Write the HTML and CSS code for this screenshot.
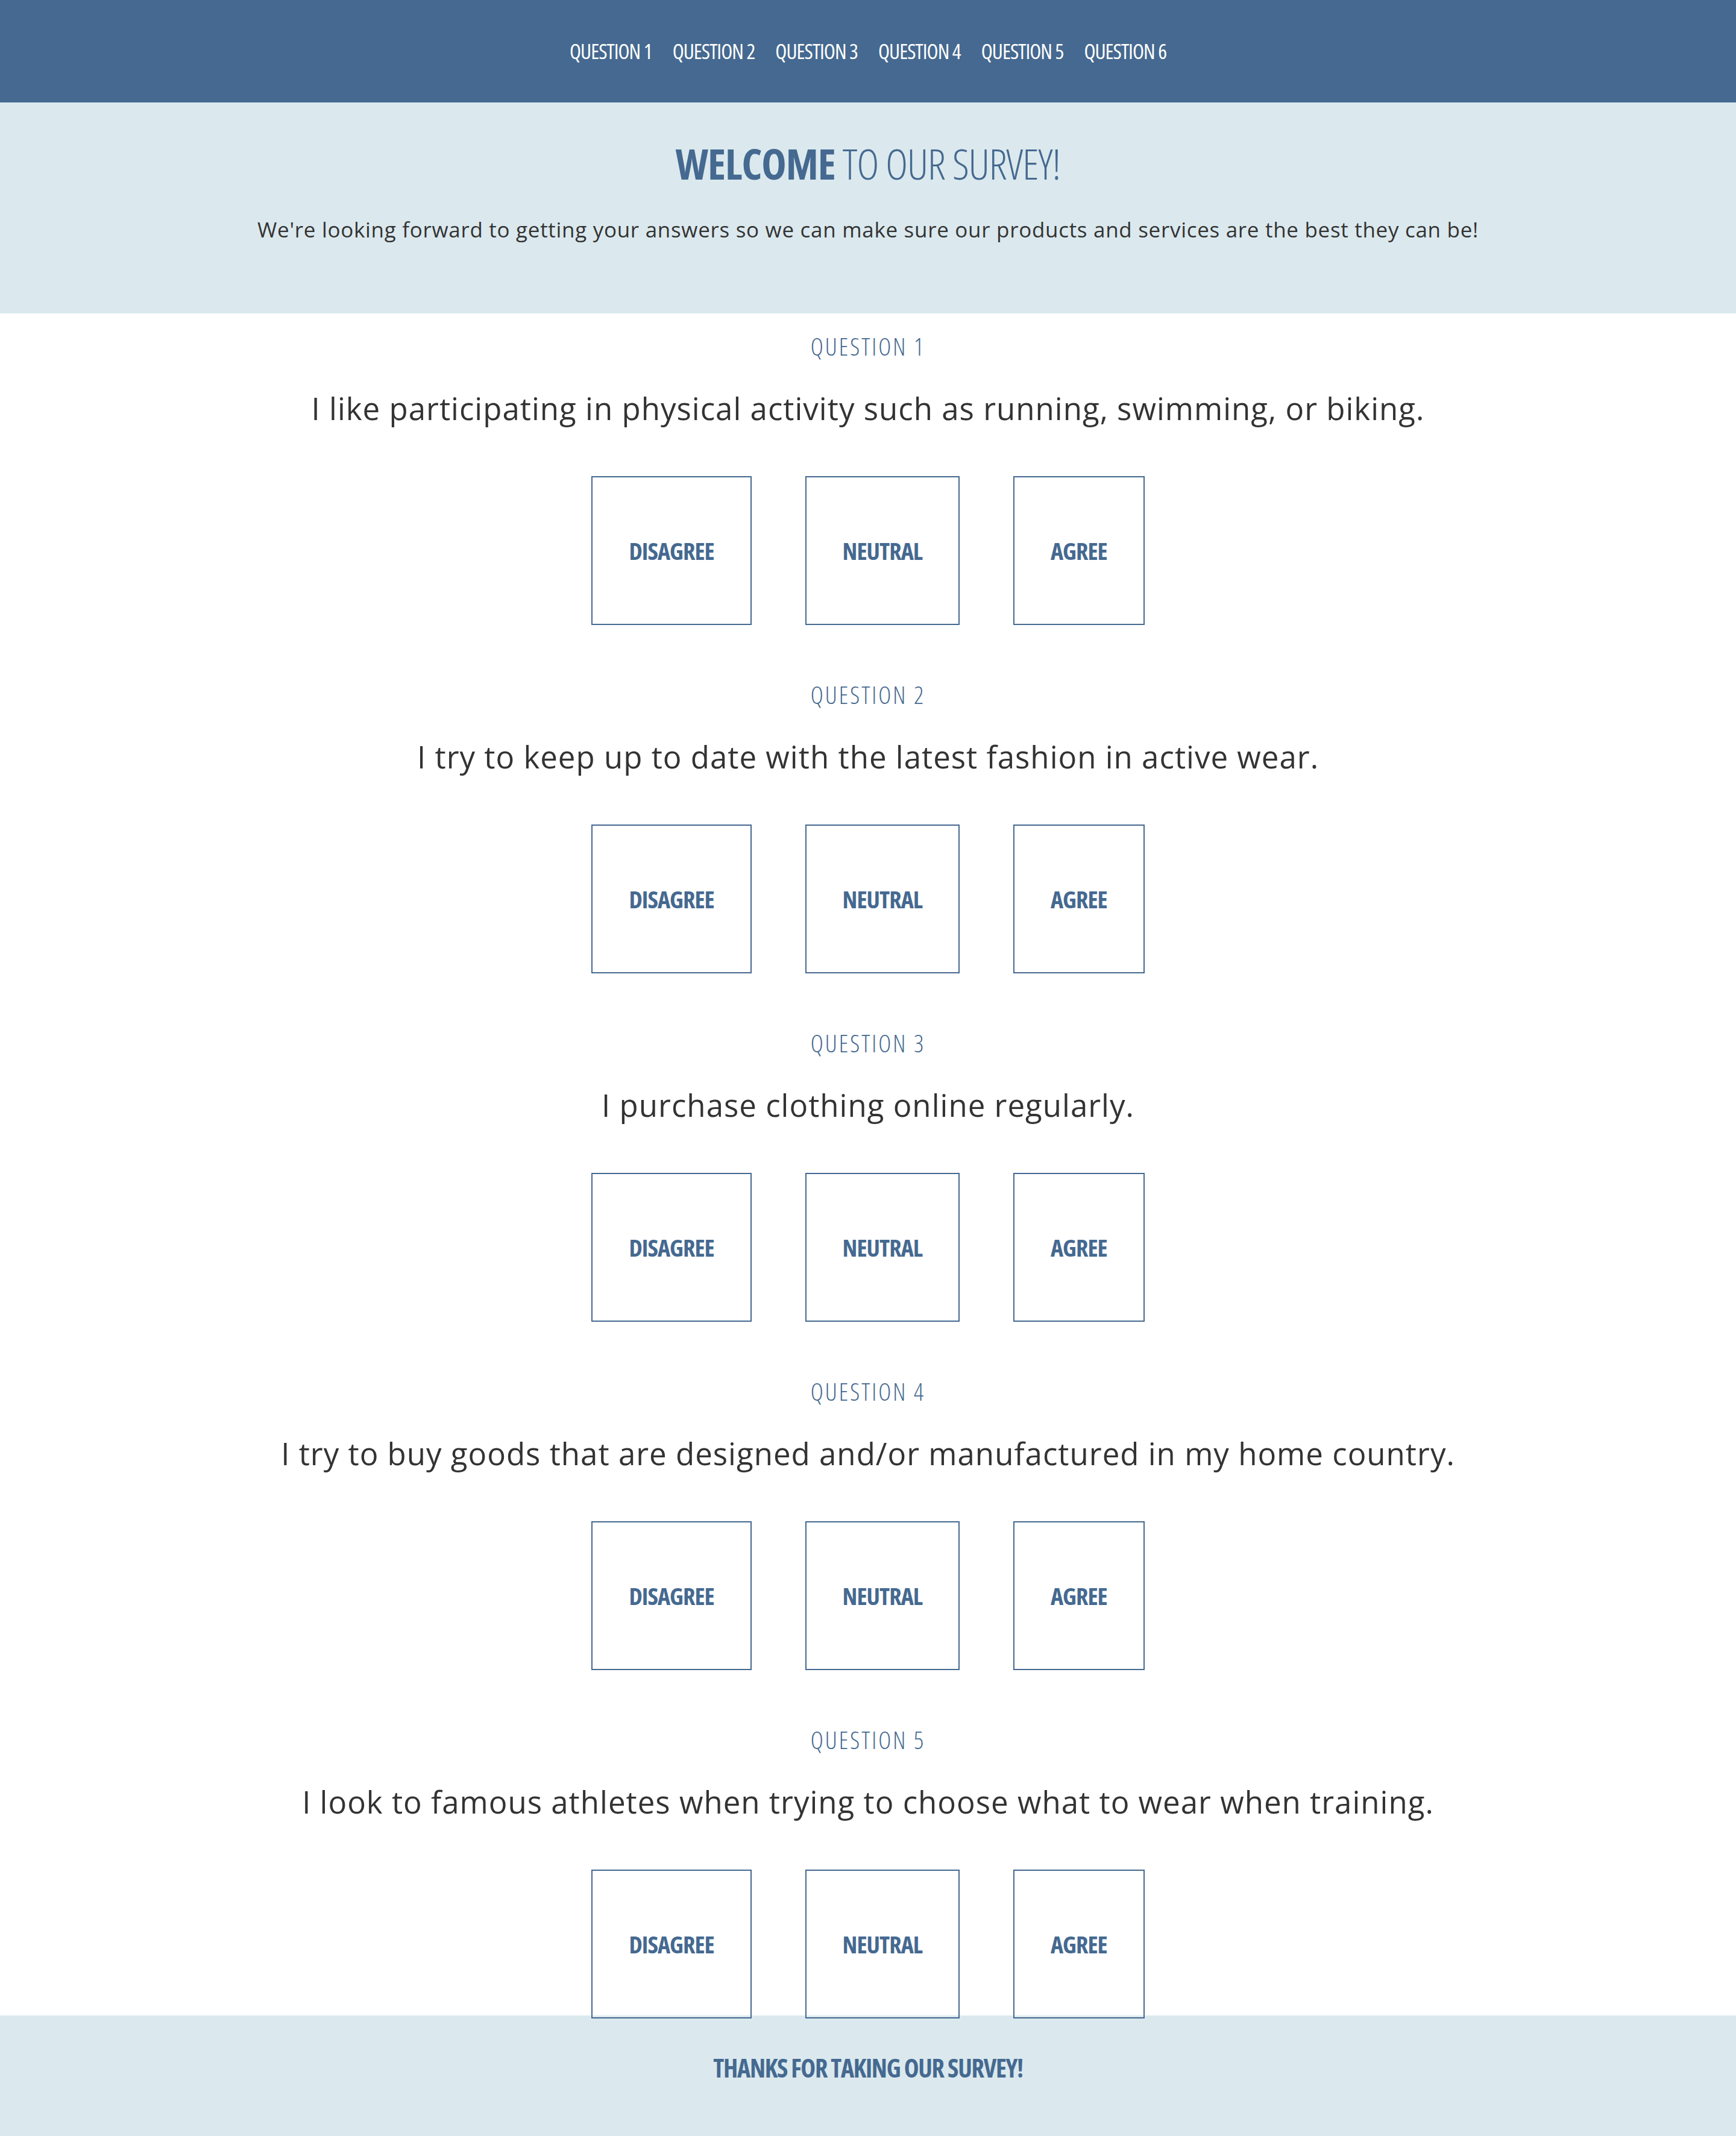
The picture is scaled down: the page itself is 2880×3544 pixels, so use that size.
FILE: index.html
```html
<!DOCTYPE html>
<html lang="en">
<head>
<meta charset="utf-8">
<title>Survey</title>
<link rel="stylesheet" href="styles.css">
</head>
<body>
<nav class="topnav">
  <a class="nav-link" href="#q1">Question 1</a>
  <a class="nav-link" href="#q2">Question 2</a>
  <a class="nav-link" href="#q3">Question 3</a>
  <a class="nav-link" href="#q4">Question 4</a>
  <a class="nav-link" href="#q5">Question 5</a>
  <a class="nav-link" href="#q6">Question 6</a>
</nav>
<header class="hero">
  <h1 class="hero-title"><span class="hero-strong">Welcome</span> to our survey!</h1>
  <p class="hero-sub">We're looking forward to getting your answers so we can make sure our products and services are the best they can be!</p>
</header>
<main class="questions">
  <section class="question" id="q1">
    <h2 class="q-label">Question 1</h2>
    <p class="q-text">I like participating in physical activity such as running, swimming, or biking.</p>
    <div class="choices"><div class="choice">Disagree</div><div class="choice">Neutral</div><div class="choice">Agree</div></div>
  </section>
  <section class="question" id="q2">
    <h2 class="q-label">Question 2</h2>
    <p class="q-text">I try to keep up to date with the latest fashion in active wear.</p>
    <div class="choices"><div class="choice">Disagree</div><div class="choice">Neutral</div><div class="choice">Agree</div></div>
  </section>
  <section class="question" id="q3">
    <h2 class="q-label">Question 3</h2>
    <p class="q-text">I purchase clothing online regularly.</p>
    <div class="choices"><div class="choice">Disagree</div><div class="choice">Neutral</div><div class="choice">Agree</div></div>
  </section>
  <section class="question" id="q4">
    <h2 class="q-label">Question 4</h2>
    <p class="q-text">I try to buy goods that are designed and/or manufactured in my home country.</p>
    <div class="choices"><div class="choice">Disagree</div><div class="choice">Neutral</div><div class="choice">Agree</div></div>
  </section>
  <section class="question" id="q5">
    <h2 class="q-label">Question 5</h2>
    <p class="q-text">I look to famous athletes when trying to choose what to wear when training.</p>
    <div class="choices"><div class="choice">Disagree</div><div class="choice">Neutral</div><div class="choice">Agree</div></div>
  </section>
</main>
<footer class="site-footer">
  <p class="footer-text">Thanks for taking our survey!</p>
</footer>
</body>
</html>
```
FILE: styles.css
```css
* { box-sizing: border-box; }

body {
  margin: 0;
  background: #ffffff;
  color: #333333;
  font-family: "Open Sans", "Noto Sans", sans-serif;
}

.nav-link,
.hero-title,
.q-label,
.choice,
.footer-text {
  font-family: "Open Sans", "Roboto Condensed", sans-serif;
  font-stretch: 75%;
}

.topnav {
  height: 170px;
  background: #456990;
  display: flex;
  justify-content: center;
  align-items: center;
  gap: 34px;
}

.nav-link {
  color: #ffffff;
  text-decoration: none;
  text-transform: uppercase;
  font-weight: 400;
  font-size: 35px;
  line-height: 38px;
  letter-spacing: -1px;
}

.hero {
  height: 350px;
  background: #dbe9ee;
  padding-top: 66px;
  text-align: center;
}

.hero-title {
  margin: 0;
  color: #456990;
  text-transform: uppercase;
  font-weight: 300;
  font-size: 70px;
  line-height: 70px;
  letter-spacing: -1px;
}

.hero-strong {
  font-weight: 700;
}

.hero-sub {
  margin: 51px 0 0;
  font-size: 35px;
  line-height: 48px;
  letter-spacing: 0.7px;
}

.questions {
  display: flex;
  flex-direction: column;
  gap: 95px;
  padding-top: 34px;
}

.question {
  text-align: center;
}

.q-label {
  margin: 0;
  color: #456990;
  text-transform: uppercase;
  font-weight: 350;
  font-size: 40px;
  line-height: 41px;
  letter-spacing: 3px;
}

.q-text {
  margin: 52px 0 0;
  font-size: 51px;
  line-height: 60px;
  letter-spacing: 1px;
}

.choices {
  margin-top: 83px;
  display: flex;
  justify-content: center;
  gap: 89px;
}

.choice {
  height: 247px;
  padding: 0 60px;
  border: 2px solid #456990;
  display: flex;
  align-items: center;
  color: #456990;
  text-transform: uppercase;
  font-weight: 700;
  font-size: 40px;
  line-height: 42px;
  letter-spacing: -1px;
}

.site-footer {
  height: 200px;
  margin-top: -5px;
  background: #dbe9ee;
  padding-top: 65px;
  text-align: center;
}

.footer-text {
  margin: 0;
  color: #456990;
  text-transform: uppercase;
  font-weight: 700;
  font-size: 42px;
  line-height: 43px;
  letter-spacing: -1.3px;
}
```
